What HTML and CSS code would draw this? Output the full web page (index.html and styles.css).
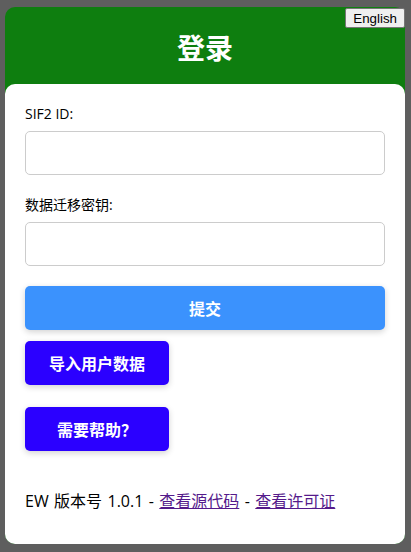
FILE: index.html
```html
<!DOCTYPE html>
<html lang="zh-CN">
<head>
<meta charset="utf-8">
<title>登录</title>
<link rel="stylesheet" href="styles.css">
</head>
<body>
<div class="panel">
  <div class="header">
    <h1 class="title">登录</h1>
    <button class="lang-btn" type="button">English</button>
  </div>
  <div class="card">
    <label class="field-label" for="sif2id">SIF2 ID:</label>
    <input class="field-input" id="sif2id" type="text">
    <label class="field-label second" for="key">数据迁移密钥:</label>
    <input class="field-input" id="key" type="text">
    <button class="btn btn-submit" type="button">提交</button>
    <button class="btn btn-action" type="button">导入用户数据</button>
    <button class="btn btn-action btn-help" type="button">需要帮助？</button>
    <p class="footer">EW 版本号 1.0.1 - <a href="#" class="link">查看源代码</a> - <a href="#" class="link">查看许可证</a></p>
  </div>
</div>
</body>
</html>
```
FILE: styles.css
```css
html, body {
  margin: 0;
  background: #5e5e5e;
}
body {
  padding: 7px 6px 0 5px;
  font-family: "Open Sans", "Noto Sans CJK SC", sans-serif;
}
.panel {
  width: 400px;
  background: #0e7e0f;
  border-radius: 10px;
}
.header {
  position: relative;
  height: 77px;
  display: flex;
  align-items: center;
  justify-content: center;
}
.title {
  margin: 0;
  color: #fff;
  font-family: "Noto Sans CJK SC", sans-serif;
  font-size: 28px;
  font-weight: 700;
  line-height: 32px;
  padding-top: 2px;
}
.lang-btn {
  position: absolute;
  top: 1px;
  right: 0;
  height: 20px;
  padding: 0 7px;
  font-family: "Liberation Sans", Arial, sans-serif;
  font-size: 13.33px;
  color: #000;
  background: #efefef;
  border: 1px solid #767676;
  border-radius: 2px;
}
.card {
  background: #fff;
  border-radius: 10px;
  padding: 20px 20px 32px;
  display: flex;
  flex-direction: column;
  align-items: flex-start;
}
.field-label {
  font-size: 14px;
  line-height: 20px;
  color: #000;
}
.field-label.second {
  margin-top: 20px;
}
.field-input {
  box-sizing: border-box;
  width: 360px;
  height: 44px;
  margin-top: 7px;
  border: 1px solid #ccc;
  border-radius: 5px;
  padding: 0 10px;
  font-size: 14px;
}
.btn {
  box-sizing: border-box;
  height: 44px;
  border: none;
  border-radius: 5px;
  color: #fff;
  font-family: "Noto Sans CJK SC", sans-serif;
  font-size: 16px;
  font-weight: 700;
  box-shadow: 0 2px 6px rgba(0, 0, 0, 0.18);
}
.btn-submit {
  width: 360px;
  margin-top: 20px;
  background: #3b92fd;
}
.btn-action {
  width: 144px;
  margin-top: 11px;
  background: #2b00ff;
}
.btn-help {
  margin-top: 22px;
}
.footer {
  margin: 39px 0 0;
  font-size: 16px;
  line-height: 22px;
  word-spacing: 1.25px;
  color: #000;
}
.link {
  color: #551a8b;
  text-decoration: underline;
}
```
